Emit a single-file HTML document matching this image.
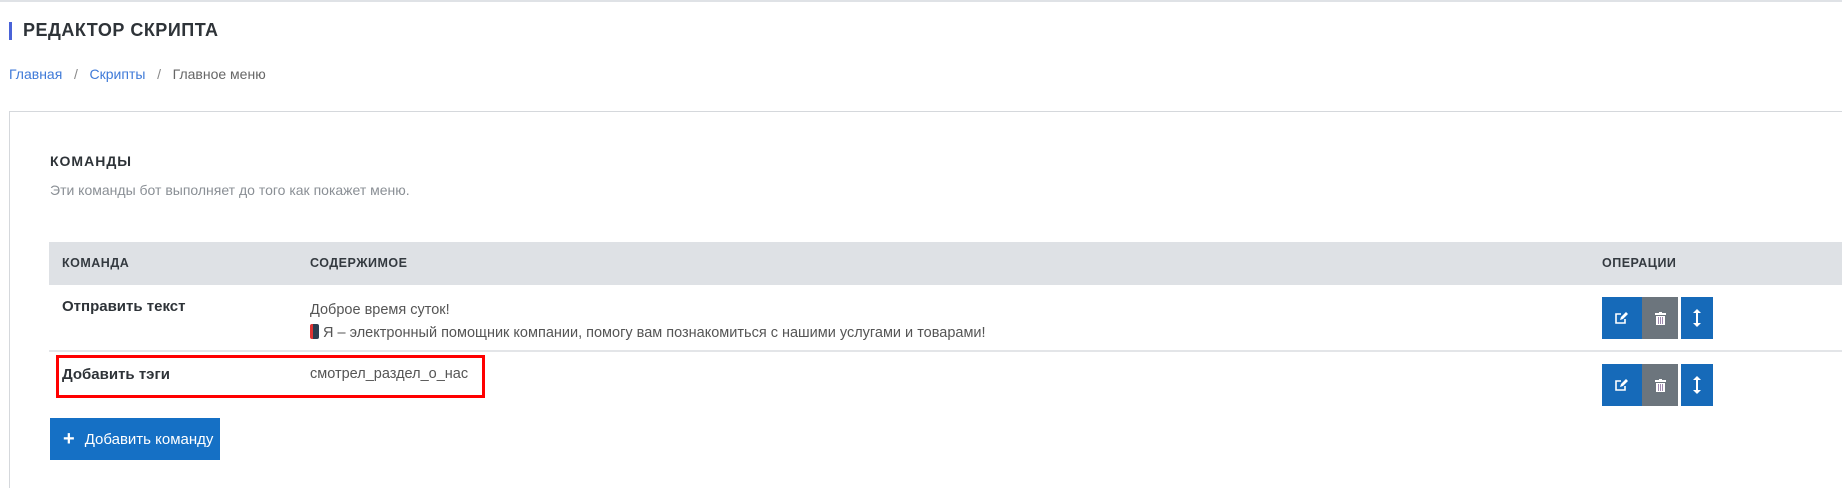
<!DOCTYPE html>
<html style="width:1842px;height:488px;overflow:hidden"><head><meta charset="utf-8"><style>
*{margin:0;padding:0;box-sizing:border-box}
body{width:1842px;height:488px;overflow:hidden;background:#fff;font-family:"Liberation Sans",sans-serif;color:#333;position:relative}
.a{position:absolute;white-space:nowrap}
.hdr{font-size:12.5px;font-weight:bold;letter-spacing:.5px;color:#343a40}
.btn{position:absolute;height:42px;display:flex;align-items:center;justify-content:center}
</style></head><body>
<div class="a" style="left:0;top:0;width:1842px;height:2px;background:#dfe2e6"></div>
<div class="a" style="left:9px;top:22px;width:3px;height:18px;background:#4a63d8"></div>
<div class="a" style="left:23px;top:20px;font-size:18px;font-weight:bold;letter-spacing:.5px;color:#2e3338">РЕДАКТОР СКРИПТА</div>
<div class="a" style="left:9px;top:66px;font-size:14px;color:#888"><span style="color:#3f7ad8">Главная</span>&nbsp;&nbsp; / &nbsp;&nbsp;<span style="color:#3f7ad8">Скрипты</span>&nbsp;&nbsp; / &nbsp;&nbsp;<span style="color:#666">Главное меню</span></div>
<div class="a" style="left:9px;top:111px;width:1833px;height:377px;border:1px solid #d5d8dc;border-right:none;border-bottom:none"></div>
<div class="a" style="left:50px;top:153px;font-size:14px;font-weight:bold;letter-spacing:1px;color:#2e3338">КОМАНДЫ</div>
<div class="a" style="left:50px;top:182px;font-size:14px;color:#8a8f95">Эти команды бот выполняет до того как покажет меню.</div>
<div class="a" style="left:49px;top:242px;width:1793px;height:43px;background:#dee1e5"></div>
<div class="a hdr" style="left:62px;top:256px">КОМАНДА</div>
<div class="a hdr" style="left:310px;top:256px">СОДЕРЖИМОЕ</div>
<div class="a hdr" style="left:1602px;top:256px">ОПЕРАЦИИ</div>
<div class="a" style="left:62px;top:298px;font-size:15px;font-weight:bold;color:#2e3338">Отправить текст</div>
<div class="a" style="left:310px;top:299px;font-size:14.5px;color:#555;line-height:23px">Доброе время суток!<br><span style="display:inline-block;width:9px;height:15px;background:#2c3e50;border-radius:2px;vertical-align:-2px;border-left:3px solid #d33"></span> Я – электронный помощник компании, помогу вам познакомиться с нашими услугами и товарами!</div>
<div class="a" style="left:49px;top:350px;width:1793px;height:2px;background:#e3e5e8"></div>
<div class="a" style="left:62px;top:366px;font-size:15px;font-weight:bold;color:#2e3338">Добавить тэги</div>
<div class="a" style="left:310px;top:366px;font-size:14.5px;color:#555">смотрел_раздел_о_нас</div>
<div class="a" style="left:56px;top:355px;width:429px;height:43px;border:3px solid #f00"></div>
<div class="btn" style="left:1602px;top:297px;width:40px;background:#166ab9"><svg width="14" height="12" viewBox="0 0 14 12"><path d="M6 2H1v9h9V7" fill="none" stroke="#fff" stroke-width="1.6"/><path d="M5 8l1-3 5-5 2 2-5 5z" fill="#fff"/></svg></div>
<div class="btn" style="left:1642px;top:297px;width:36px;background:#6c757d"><svg width="11" height="13" viewBox="0 0 11 13"><rect x="0" y="1" width="11" height="2" fill="#fff"/><rect x="4" y="0" width="3" height="2" fill="#fff"/><path d="M1 4h9v9H1z" fill="#fff"/><path d="M3.5 5v7M5.5 5v7M7.5 5v7" stroke="#a08ab0" stroke-width="1"/></svg></div>
<div class="btn" style="left:1681px;top:297px;width:32px;background:#166ab9"><svg width="8" height="18" viewBox="0 0 8 18"><path d="M4 0L8 4H5v10h3l-4 4-4-4h3V4H0z" fill="#fff"/></svg></div>
<div class="btn" style="left:1602px;top:364px;width:40px;background:#166ab9"><svg width="14" height="12" viewBox="0 0 14 12"><path d="M6 2H1v9h9V7" fill="none" stroke="#fff" stroke-width="1.6"/><path d="M5 8l1-3 5-5 2 2-5 5z" fill="#fff"/></svg></div>
<div class="btn" style="left:1642px;top:364px;width:36px;background:#6c757d"><svg width="11" height="13" viewBox="0 0 11 13"><rect x="0" y="1" width="11" height="2" fill="#fff"/><rect x="4" y="0" width="3" height="2" fill="#fff"/><path d="M1 4h9v9H1z" fill="#fff"/><path d="M3.5 5v7M5.5 5v7M7.5 5v7" stroke="#a08ab0" stroke-width="1"/></svg></div>
<div class="btn" style="left:1681px;top:364px;width:32px;background:#166ab9"><svg width="8" height="18" viewBox="0 0 8 18"><path d="M4 0L8 4H5v10h3l-4 4-4-4h3V4H0z" fill="#fff"/></svg></div>
<div class="btn" style="left:50px;top:418px;width:170px;background:#1570c5;color:#fff;font-size:15px;justify-content:flex-start;padding-left:13px"><span style="font-size:20px;font-weight:bold;margin-right:10px;line-height:1">+</span>Добавить команду</div>
</body></html>
